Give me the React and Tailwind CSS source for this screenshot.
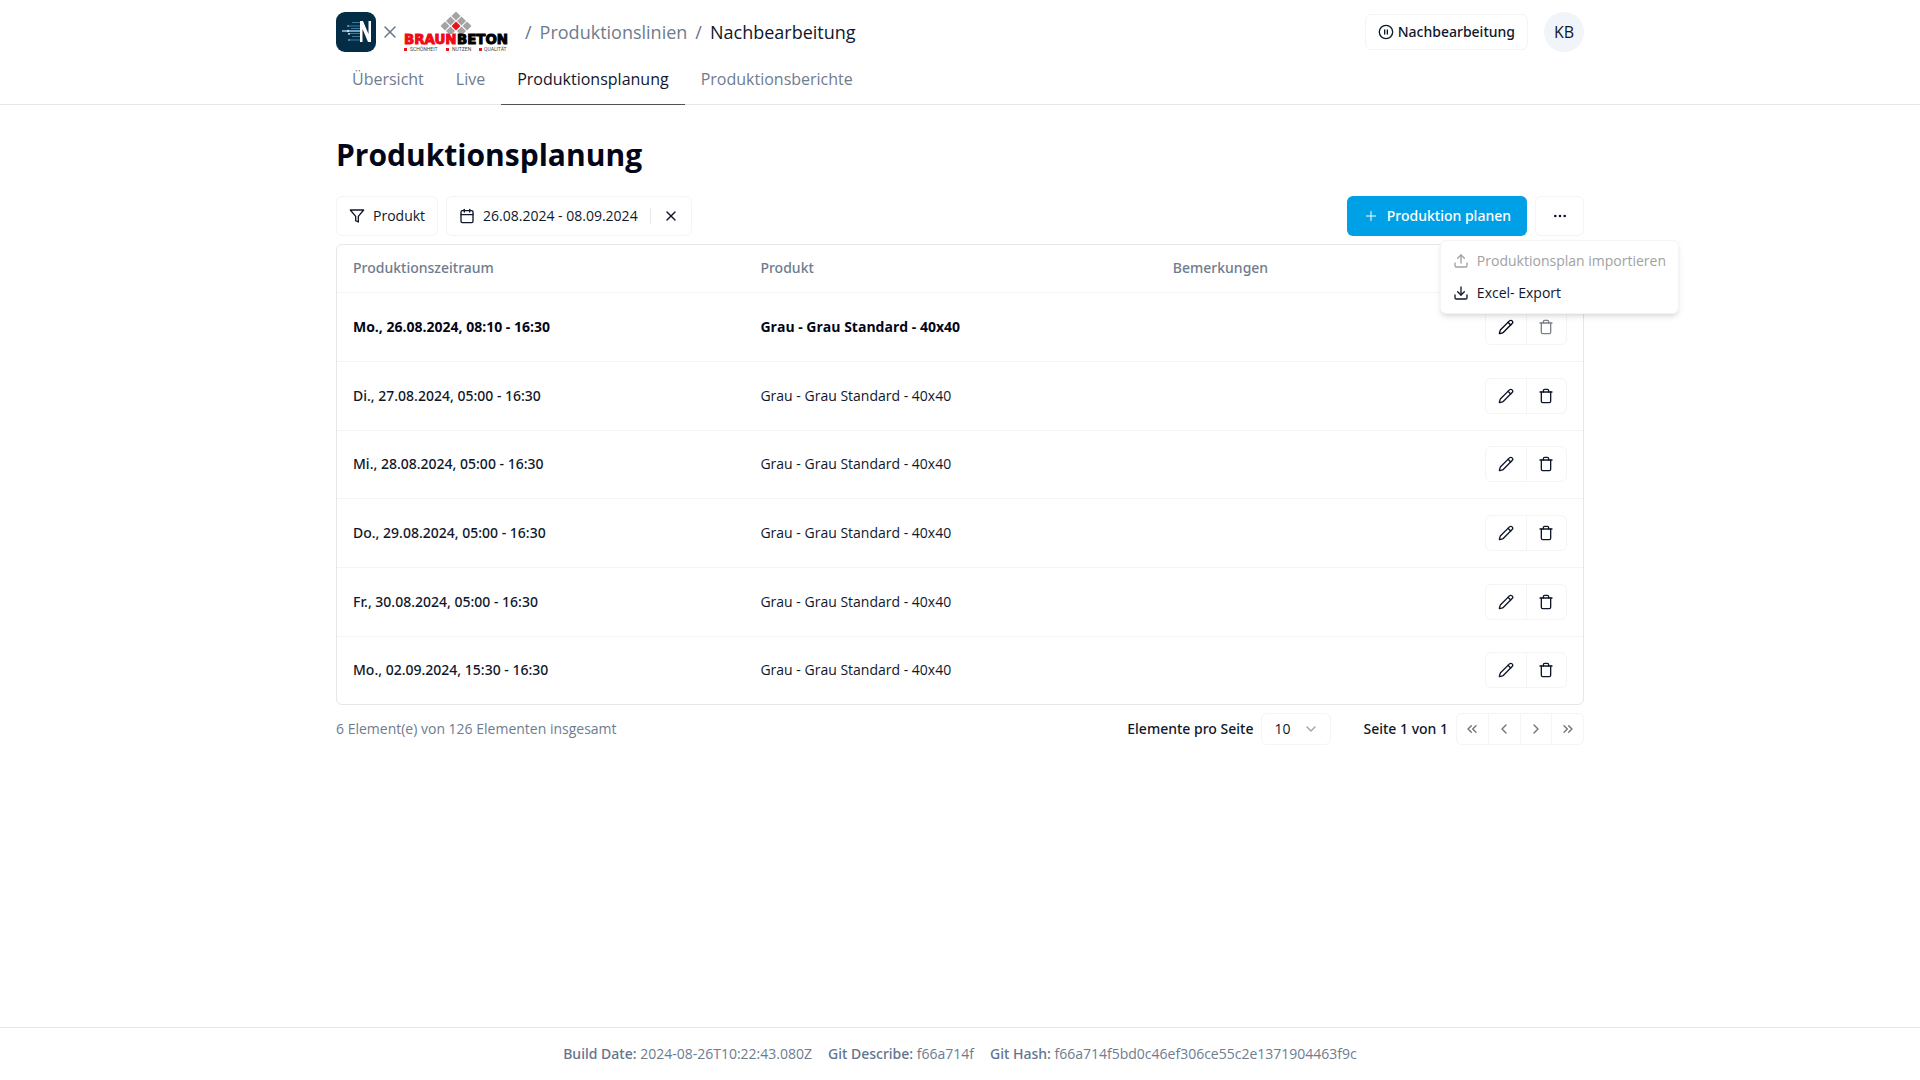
import { X, Plus, Pencil, Trash, CirclePause, Calendar, ChevronDown, Download, Upload, Ellipsis, ChevronsLeft, ChevronsRight, ChevronLeft, ChevronRight } from "lucide-react";
import { LuFilter } from "react-icons/lu";

const medium = "font-['Noto_Sans',sans-serif] font-medium";

const tabs = [
  { label: "Übersicht" },
  { label: "Live" },
  { label: "Produktionsplanung", active: true },
  { label: "Produktionsberichte" },
];

const rows = [
  { time: "Mo., 26.08.2024, 08:10 - 16:30", current: true },
  { time: "Di., 27.08.2024, 05:00 - 16:30" },
  { time: "Mi., 28.08.2024, 05:00 - 16:30" },
  { time: "Do., 29.08.2024, 05:00 - 16:30" },
  { time: "Fr., 30.08.2024, 05:00 - 16:30" },
  { time: "Mo., 02.09.2024, 15:30 - 16:30" },
];

const pager = [
  { label: "Erste Seite", Icon: ChevronsLeft },
  { label: "Vorherige Seite", Icon: ChevronLeft },
  { label: "Nächste Seite", Icon: ChevronRight },
  { label: "Letzte Seite", Icon: ChevronsRight },
];

const build = [
  ["Build Date:", "2024-08-26T10:22:43.080Z"],
  ["Git Describe:", "f66a714f"],
  ["Git Hash:", "f66a714f5bd0c46ef306ce55c2e1371904463f9c"],
];

function AppLogo() {
  return (
    <svg viewBox="0 0 40 40" className="size-10 shrink-0" role="img" aria-label="N">
      <rect width="40" height="40" rx="9" fill="#042c45" />
      <g stroke="#4f9cc8" strokeWidth="1" fill="none">
        <path d="M16 10.500h9M12 14h13M15 16.500h10M12 21.500h13M16 24.500h9M13 28h12" opacity=".7" />
        <path d="M6 19h19" stroke="#b9e2f7" strokeWidth="1.300" />
      </g>
      <g fill="#b9e2f7">
        <circle cx="12" cy="14" r=".8" />
        <circle cx="12" cy="19" r="1.200" />
        <circle cx="13" cy="22" r=".9" />
        <circle cx="13" cy="28" r=".8" />
      </g>
      <path d="M24 30V9h3l5.500 13V9H35v21h-3l-5.500-13v13z" fill="#fff" />
    </svg>
  );
}

function BrandLogo() {
  const tiles = [
    [52, 4], [46.5, 9], [57.5, 9], [41, 14], [63, 14], [46.5, 19], [57.5, 19],
  ];
  return (
    <svg viewBox="0 0 105 40" className="h-10 w-[105px] shrink-0" role="img" aria-label="Braun Beton">
      {tiles.map(([x, y]) => (
        <path key={x + "-" + y} d={`M${x} ${y - 4.5}l4.500 4.500l-4.500 4.500l-4.500-4.500z`} fill="#a3a3a3" />
      ))}
      <path d="M52 9.500l4.500 4.500l-4.500 4.500l-4.500-4.500z" fill="#e8141c" />
      <rect x="0" y="22" width="105" height="11" fill="#fff" />
      <g fontFamily="DejaVu Sans, sans-serif" fontWeight="700" fontSize="13.400">
        <text x="0" y="32" fill="#f00a14" stroke="#f00a14" strokeWidth="1">BRAUN</text>
        <text x="53" y="32" fill="#000" stroke="#000" strokeWidth="1">BETON</text>
      </g>
      <g fill="#e8141c">
        <rect x="0" y="36" width="3" height="3" />
        <rect x="42" y="36" width="3" height="3" />
        <rect x="75" y="36" width="3" height="3" />
      </g>
      <g fontFamily="Roboto, sans-serif" fontSize="5" fill="#444">
        <text x="6" y="39">SCHÖNHEIT</text>
        <text x="48" y="39">NUTZEN</text>
        <text x="80" y="39">QUALITÄT</text>
      </g>
    </svg>
  );
}

export default function App() {
  return (
    <div className="flex min-h-screen flex-col bg-white font-['Open_Sans',sans-serif] text-sm text-slate-900">
      <header className="border-b border-gray-200">
        <div className="mx-auto max-w-7xl px-4 pt-3">
          <div className="flex items-center justify-between">
            <div className="flex items-center">
              <AppLogo />
              <X className="mx-1 size-5 text-slate-500" strokeWidth={1.8} />
              <BrandLogo />
              <nav aria-label="Breadcrumb" className="ml-4 flex items-center gap-2 text-lg">
                <span className="text-slate-500">/</span>
                <a href="#" className="text-[#6e7c8f]">Produktionslinien</a>
                <span className="text-slate-500">/</span>
                <a href="#" className="text-slate-900">Nachbearbeitung</a>
              </nav>
            </div>
            <div className="flex items-center gap-4">
              <button className={`flex h-9 items-center gap-1 rounded-md border border-gray-100 px-3 ${medium}`}>
                <CirclePause className="size-4" />
                Nachbearbeitung
              </button>
              <button className="size-10 rounded-full bg-slate-100 text-base">KB</button>
            </div>
          </div>
          <nav className="flex text-base">
            {tabs.map((t) => (
              <a
                key={t.label}
                href="#"
                className={t.active ? "-mb-px flex h-[53px] items-center border-b border-neutral-600 px-4 pt-0.5" : "flex h-[52px] items-center px-4 pt-0.5 text-[#6e7c8f]"}
              >
                {t.label}
              </a>
            ))}
          </nav>
        </div>
      </header>

      <main className="mx-auto w-full max-w-7xl grow px-4 pt-8">
        <h1 className="text-3xl leading-9 font-bold text-slate-950">Produktionsplanung</h1>
        <div className="mt-[23px] flex items-center justify-between">
          <div className="flex gap-2">
            <button className="flex h-10 items-center gap-2 rounded-md border border-gray-100 px-3">
              <LuFilter className="size-4" />
              Produkt
            </button>
            <div className="flex h-10 items-center rounded-md border border-gray-100">
              <button className="flex items-center gap-2 pl-3">
                <Calendar className="size-4" />
                26.08.2024 - 08.09.2024
              </button>
              <span className="ml-3 h-4 w-px bg-gray-200" />
              <button aria-label="Zeitraum entfernen" className="px-3">
                <X className="size-4" />
              </button>
            </div>
          </div>
          <div className="relative flex gap-2">
            <button className={`flex h-10 items-center gap-2 rounded-md bg-[#00a0e6] px-4 text-white ${medium}`}>
              <Plus className="size-4" strokeWidth={1.5} />
              Produktion planen
            </button>
            <button aria-label="Weitere Aktionen" aria-expanded="true" className="flex h-10 w-[49px] items-center justify-center rounded-md border border-gray-100">
              <Ellipsis className="size-4" />
            </button>
            <div role="menu" className="absolute top-11 -right-[95px] w-max rounded-md border border-gray-100 bg-white p-1 shadow-md">
              <button role="menuitem" disabled className="flex h-8 w-full items-center gap-2 px-2 text-neutral-400">
                <Upload className="size-4" />
                Produktionsplan importieren
              </button>
              <button role="menuitem" className="flex h-8 w-full items-center gap-2 px-2">
                <Download className="size-4" />
                Excel- Export
              </button>
            </div>
          </div>
        </div>

        <div className="mt-2 rounded-md border border-gray-200">
          <table className="w-full table-fixed text-left">
            <thead>
              <tr className="h-[47px] border-b border-gray-100 text-[#6e7c8f]">
                <th className={`w-[32.7%] px-4 ${medium}`}>Produktionszeitraum</th>
                <th className={`w-[33.1%] px-4 ${medium}`}>Produkt</th>
                <th className={`px-4 ${medium}`}>Bemerkungen</th>
                <th className="w-28" aria-label="Aktionen" />
              </tr>
            </thead>
            <tbody>
              {rows.map((r) => (
                <tr key={r.time} className={r.current ? "h-[69px] border-b border-gray-100 font-bold text-slate-950" : "h-[69px] border-b border-gray-100 nth-[3n]:h-[68px] last:border-0"}>
                  <td className={r.current ? "px-4" : `px-4 ${medium}`}>{r.time}</td>
                  <td className="px-4">Grau - Grau Standard - 40x40</td>
                  <td className="px-4" />
                  <td className="pr-4">
                    <div className="ml-auto flex h-9 w-[82px] divide-x divide-gray-100 rounded-md border border-gray-100">
                      <button aria-label="Bearbeiten" className="flex flex-1 items-center justify-center">
                        <Pencil className="size-4" />
                      </button>
                      <button aria-label="Löschen" disabled={r.current} className="flex flex-1 items-center justify-center disabled:opacity-50">
                        <Trash className="size-4" />
                      </button>
                    </div>
                  </td>
                </tr>
              ))}
            </tbody>
          </table>
        </div>

        <div className="mt-2 flex items-center justify-between">
          <p className="text-[#6e7c8f]">6 Element(e) von 126 Elementen insgesamt</p>
          <div className="flex items-center">
            <label htmlFor="page-size" className={medium}>Elemente pro Seite</label>
            <div className="relative ml-2">
              <select id="page-size" defaultValue="10" className="h-8 w-[70px] appearance-none rounded-md border border-gray-100 px-3">
                <option>10</option>
              </select>
              <ChevronDown className="pointer-events-none absolute top-2 right-3 size-4 text-neutral-400" />
            </div>
            <span className={`ml-8 ${medium}`}>Seite 1 von 1</span>
            <div className="ml-2 flex h-8 w-32 divide-x divide-gray-100 rounded-md border border-gray-100">
              {pager.map(({ label, Icon }) => (
                <button key={label} aria-label={label} disabled className="flex flex-1 items-center justify-center text-neutral-500">
                  <Icon className="size-4" />
                </button>
              ))}
            </div>
          </div>
        </div>
      </main>

      <footer className="flex h-[53px] items-center justify-center gap-4 border-t border-gray-200 text-[#6e7c8f]">
        {build.map(([k, v]) => (
          <span key={k}>
            <span className={`text-slate-500 ${medium}`}>{k}</span> {v}
          </span>
        ))}
      </footer>
    </div>
  );
}
